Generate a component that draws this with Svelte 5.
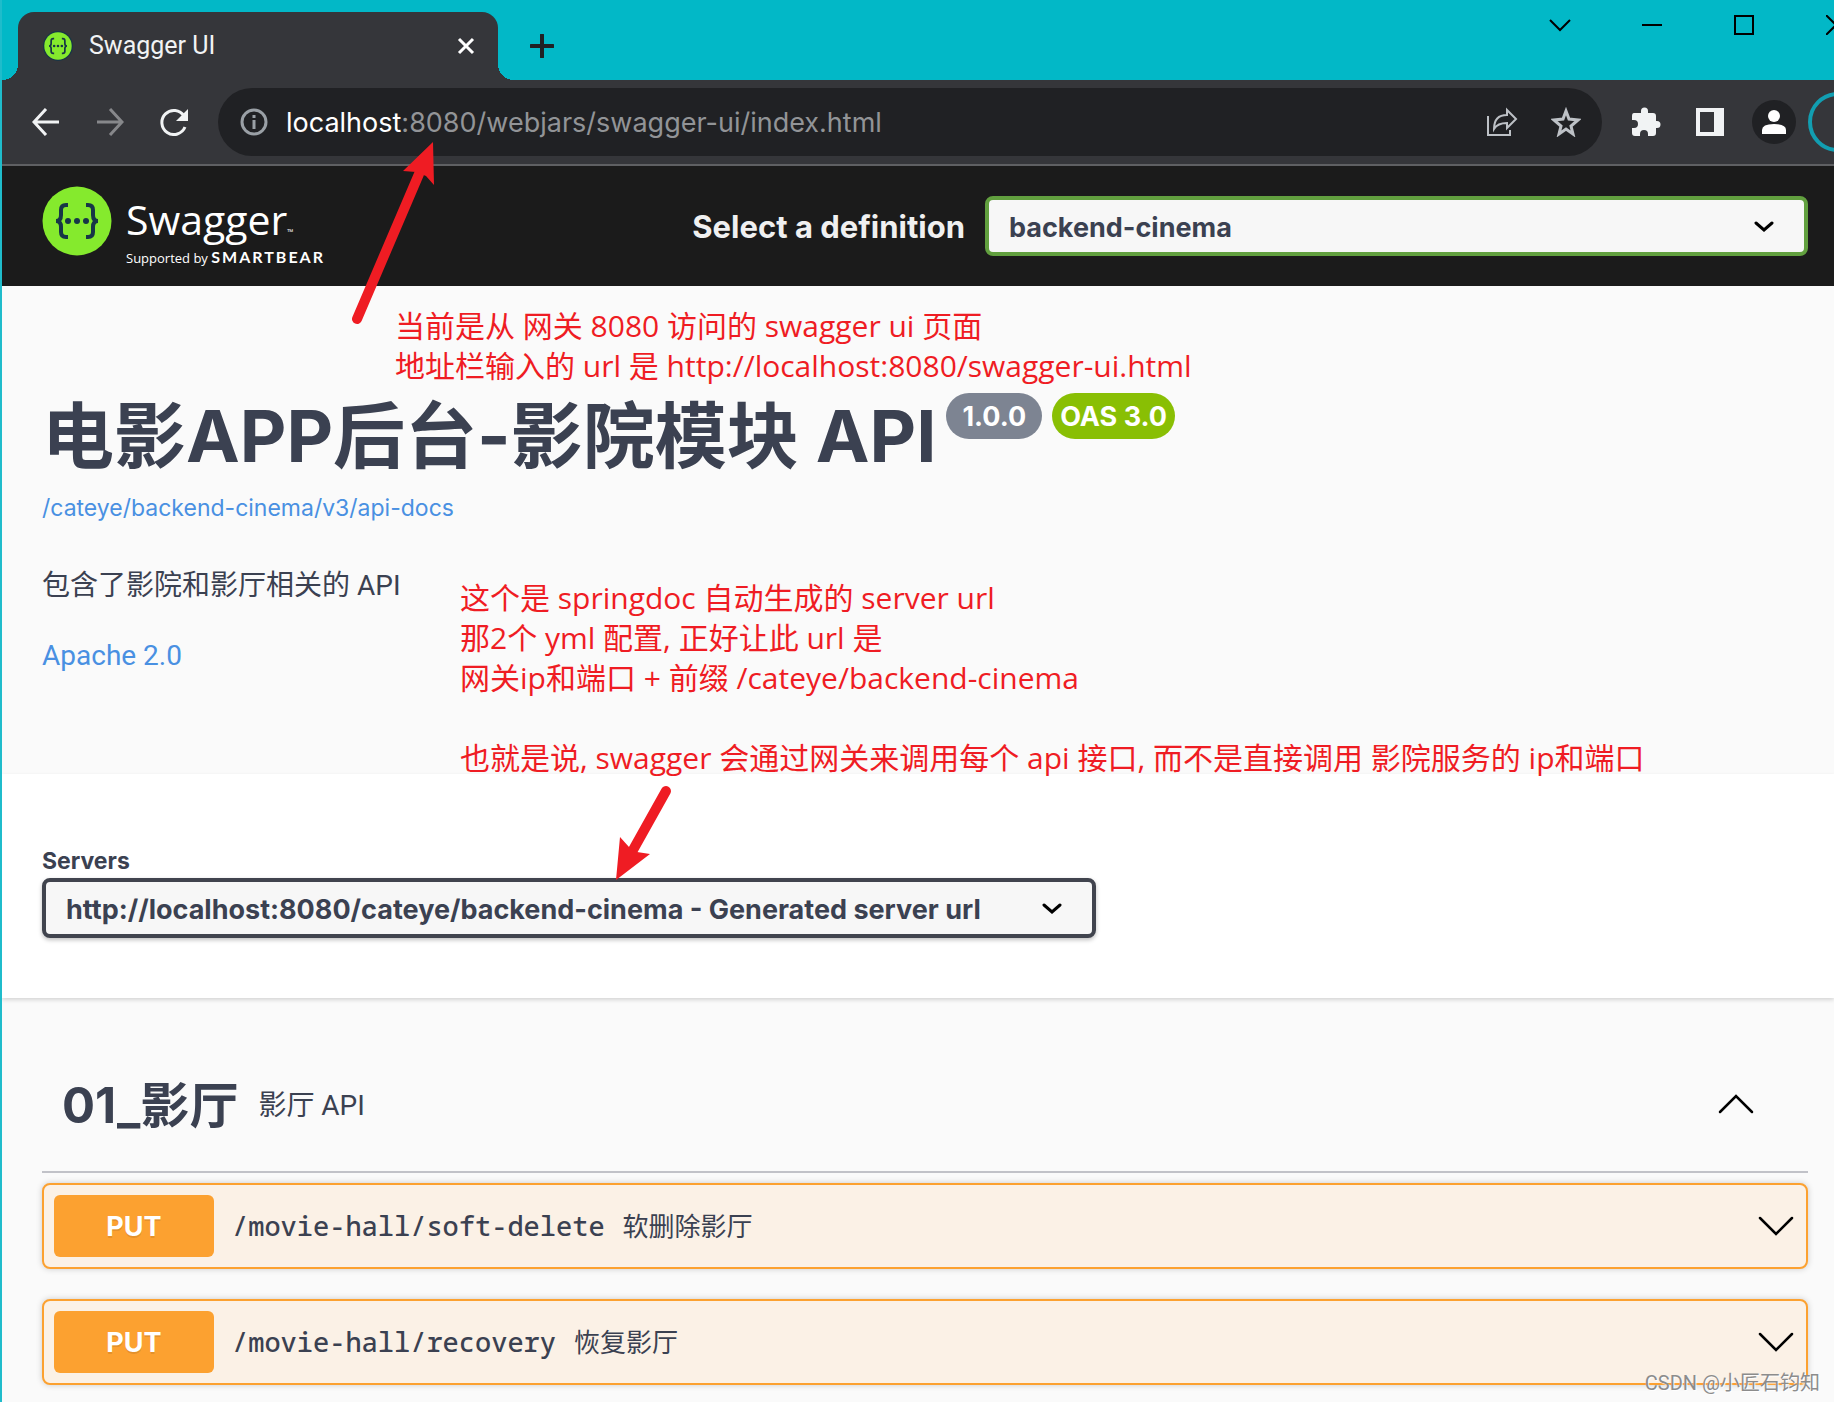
<script>
  const definitions = ['backend-cinema'];
  const servers = ['http://localhost:8080/cateye/backend-cinema - Generated server url'];

  let definition = definitions[0];
  let server = servers[0];
  let tagOpen = true;

  const operations = [
    { method: 'PUT', path: '/movie-hall/soft-delete', summary: '软删除影厅' },
    { method: 'PUT', path: '/movie-hall/recovery', summary: '恢复影厅' }
  ];
</script>

<div class="window">
  <div class="tab-strip">
    <div class="tab">
      <svg class="favicon" viewBox="0 0 70 70" aria-hidden="true">
        <circle cx="35" cy="35" r="35" fill="#173647" />
        <circle cx="35" cy="35" r="32" fill="#85ea2d" />
        <g fill="none" stroke="#173647" stroke-width="4">
          <path d="M26 18h-2q-5 0-5 5v6q0 6-5 6q5 0 5 6v6q0 5 5 5h2" />
          <path d="M44 18h2q5 0 5 5v6q0 6 5 6q-5 0-5 6v6q0 5-5 5h-2" />
        </g>
        <g fill="#173647"><circle cx="26" cy="35" r="3" /><circle cx="35" cy="35" r="3" /><circle cx="44" cy="35" r="3" /></g>
      </svg>
      <span class="tab-title">Swagger UI</span>
      <button class="tab-close" aria-label="Close tab">
        <svg width="18" height="18" viewBox="0 0 18 18"><path d="M2 2l14 14M16 2L2 16" stroke="#fff" stroke-width="3" /></svg>
      </button>
    </div>
    <button class="new-tab" aria-label="New tab">
      <svg width="24" height="24" viewBox="0 0 24 24"><path d="M12 1v22M1 12h22" stroke="#202124" stroke-width="4" stroke-linecap="round" /></svg>
    </button>
    <div class="window-controls">
      <button aria-label="Search tabs">
        <svg width="22" height="14" viewBox="0 0 22 14"><path d="M1 2l10 10L21 2" fill="none" stroke="#000" stroke-width="2" /></svg>
      </button>
      <button aria-label="Minimize">
        <svg width="20" height="20" viewBox="0 0 20 20"><path d="M0 10h20" stroke="#000" stroke-width="2" /></svg>
      </button>
      <button aria-label="Maximize">
        <svg width="20" height="20" viewBox="0 0 20 20"><path d="M1 1h18v18H1z" fill="none" stroke="#000" stroke-width="2" /></svg>
      </button>
      <button aria-label="Close">
        <svg width="20" height="20" viewBox="0 0 20 20"><path d="M0 0l20 20M20 0L0 20" stroke="#000" stroke-width="2" /></svg>
      </button>
    </div>
  </div>

  <div class="toolbar">
    <button aria-label="Back">
      <svg width="28" height="28" viewBox="0 0 28 28"><path d="M27 14H3M14 1L2 14l12 13" fill="none" stroke="#f1f3f4" stroke-width="3" /></svg>
    </button>
    <button aria-label="Forward">
      <svg width="28" height="28" viewBox="0 0 28 28"><path d="M1 14h24M14 1l12 13-12 13" fill="none" stroke="#87888b" stroke-width="3" /></svg>
    </button>
    <button aria-label="Reload">
      <svg width="28" height="28" viewBox="0 0 28 28">
        <path d="M24 8A12 12 0 1 0 25 19" fill="none" stroke="#f1f3f4" stroke-width="3" />
        <path d="M28 1v12H16z" fill="#f1f3f4" />
      </svg>
    </button>
    <div class="omnibox">
      <svg width="28" height="28" viewBox="0 0 28 28" aria-hidden="true">
        <circle cx="14" cy="14" r="12" fill="none" stroke="#9aa0a6" stroke-width="3" />
        <path d="M14 12v9M14 7v3" stroke="#9aa0a6" stroke-width="3" />
      </svg>
      <div class="url" role="textbox" tabindex="0" contenteditable="true" spellcheck="false" aria-label="Address"><b>localhost</b>:8080/webjars/swagger-ui/index.html</div>
      <button aria-label="Share">
        <svg width="32" height="30" viewBox="0 0 32 30" fill="none" stroke="#bdc1c6" stroke-width="2">
          <path d="M2 9v19h22v-5" />
          <path d="M8 22C8 12 13 8 21 8V3l9 9-9 9v-5c-6 0-10 1-13 6z" />
        </svg>
      </button>
      <button aria-label="Bookmark">
        <svg width="30" height="30" viewBox="0 0 30 30"><path d="M15 4l3 8 9 1-7 6 2 8-7-5-7 5 2-8-7-6 9-1z" fill="none" stroke="#bdc1c6" stroke-width="3" /></svg>
      </button>
    </div>
    <button aria-label="Extensions">
      <svg width="30" height="30" viewBox="0 0 30 30">
        <path d="M3 6h7v-2a3.5 3.5 0 0 1 7 0v2h5q3 0 3 3v5h1a3.5 3.5 0 0 1 0 7h-1v5q0 3-3 3h-5v-2a4 4 0 0 0-8 0v2H4q-3 0-3-3v-5h2a4 4 0 0 0 0-8H1V9q0-3 2-3z" fill="#f1f3f4" />
      </svg>
    </button>
    <button aria-label="Side panel">
      <svg width="28" height="28" viewBox="0 0 28 28"><path d="M0 0h28v28H0zM4 4v20h14V4z" fill="#f1f3f4" fill-rule="evenodd" /></svg>
    </button>
    <button aria-label="Profile">
      <svg width="44" height="44" viewBox="0 0 44 44">
        <circle cx="22" cy="22" r="22" fill="#202124" />
        <circle cx="22" cy="16" r="6" fill="#fff" />
        <path d="M10 34v-4q0-6 12-6t12 6v4z" fill="#fff" />
      </svg>
    </button>
    <button aria-label="Update">
      <svg width="60" height="60" viewBox="0 0 60 60"><circle cx="30" cy="30" r="28" fill="none" stroke="#129eb1" stroke-width="4" /></svg>
    </button>
  </div>

  <header class="topbar">
    <a class="logo" href="#top">
      <svg width="70" height="70" viewBox="0 0 70 70" aria-hidden="true">
        <circle cx="35" cy="35" r="34.5" fill="#85ea2d" />
        <g fill="none" stroke="#173647" stroke-width="4">
          <path d="M26 19h-2q-5 0-5 5v5q0 6-5 6q5 0 5 6v5q0 5 5 5h2" />
          <path d="M44 19h2q5 0 5 5v5q0 6 5 6q-5 0-5 6v5q0 5-5 5h-2" />
        </g>
        <g fill="#173647"><circle cx="26" cy="35" r="3" /><circle cx="35" cy="35" r="3" /><circle cx="44" cy="35" r="3" /></g>
      </svg>
      <span class="wordmark">
        <span class="name">Swagger<small>™</small></span>
        <span class="support">Supported by <b>SMARTBEAR</b></span>
      </span>
    </a>
    <label for="definition">Select a definition</label>
    <div class="select definition">
      <select id="definition" bind:value={definition}>
        {#each definitions as d}<option>{d}</option>{/each}
      </select>
      <svg width="20" height="12" viewBox="0 0 20 12"><path d="M2 2l8 7 8-7" fill="none" stroke="#000" stroke-width="3" stroke-linecap="round" /></svg>
    </div>
  </header>

  <section class="info">
    <div class="title">
      <h1>电影APP后台-影院模块 API</h1>
      <span class="badge version">1.0.0</span>
      <span class="badge oas">OAS 3.0</span>
    </div>
    <a class="docs" href="#docs">/cateye/backend-cinema/v3/api-docs</a>
    <p>包含了影院和影厅相关的 API</p>
    <a class="license" href="#license">Apache 2.0</a>
  </section>

  <section class="schemes">
    <label for="server">Servers</label>
    <div class="select server">
      <select id="server" bind:value={server}>
        {#each servers as s}<option>{s}</option>{/each}
      </select>
      <svg width="20" height="12" viewBox="0 0 20 12"><path d="M2 2l8 7 8-7" fill="none" stroke="#000" stroke-width="3" stroke-linecap="round" /></svg>
    </div>
  </section>

  <main>
    <div class="tag">
      <h2>01_影厅</h2>
      <span>影厅 API</span>
      <button aria-label="Toggle section" aria-expanded={tagOpen} on:click={() => (tagOpen = !tagOpen)}>
        <svg width="36" height="20" viewBox="0 0 36 20"><path d="M2 18L18 2l16 16" fill="none" stroke="#000" stroke-width="2.5" stroke-linecap="round" /></svg>
      </button>
    </div>
    {#if tagOpen}
      <div class="operations">
        {#each operations as op}
          <button class="operation">
            <span class="method">{op.method}</span>
            <code>{op.path}</code>
            <span class="summary">{op.summary}</span>
            <svg width="36" height="20" viewBox="0 0 36 20"><path d="M2 2l16 16L34 2" fill="none" stroke="#000" stroke-width="2.5" stroke-linecap="round" /></svg>
          </button>
        {/each}
      </div>
    {/if}
  </main>

  <!-- red notes drawn over the page -->
  <p class="note gateway">当前是从 网关 8080 访问的 swagger ui 页面<br />地址栏输入的 url 是 http://localhost:8080/swagger-ui.html</p>
  <p class="note generated">这个是 springdoc 自动生成的 server url<br />那2个 yml 配置, 正好让此 url 是<br />网关ip和端口 + 前缀 /cateye/backend-cinema<br /><br />也就是说, swagger 会通过网关来调用每个 api 接口, 而不是直接调用 影院服务的 ip和端口</p>
  <svg class="arrow to-url" width="90" height="190" viewBox="0 0 90 190">
    <path d="M8 179L70 34" stroke="#ef1c23" stroke-width="10" stroke-linecap="round" />
    <path d="M84 2L54 31l13 1 10 4 8 9z" fill="#ef1c23" />
  </svg>
  <svg class="arrow to-server" width="70" height="100" viewBox="0 0 70 100">
    <path d="M56 11L23 70" stroke="#ef1c23" stroke-width="10" stroke-linecap="round" />
    <path d="M6 100l4-43 9 10 8 5 13 2z" fill="#ef1c23" />
  </svg>
  <span class="watermark">CSDN @小匠石钧知</span>
</div>

<style>
  :global(body) {
    margin: 0;
    background: #fafafa;
  }
  .window {
    position: relative;
    box-sizing: border-box;
    min-height: 100vh;
    border-left: 2px solid #1fbccb;
    overflow: hidden;
    background: #fafafa;
    color: #3b4151;
    font-family: Inter, "Noto Sans CJK SC", sans-serif;
  }
  button {
    padding: 0;
    border: 0;
    background: none;
    font: inherit;
    color: inherit;
    display: flex;
    align-items: center;
    justify-content: center;
    cursor: pointer;
  }
  svg {
    display: block;
    flex: none;
  }
  a {
    color: #4990e2;
    text-decoration: none;
  }

  .tab-strip {
    display: flex;
    height: 80px;
    background: #02b8c7;
  }
  .tab {
    position: relative;
    box-sizing: border-box;
    display: flex;
    align-items: center;
    width: 480px;
    height: 68px;
    margin: 12px 0 0 16px;
    padding: 0 23px 0 25px;
    gap: 16px;
    border-radius: 16px 16px 0 0;
    background: #35363a;
    color: #f1f3f4;
  }
  .tab::before,
  .tab::after {
    content: "";
    position: absolute;
    bottom: 0;
    width: 16px;
    height: 16px;
  }
  .tab::before {
    right: 100%;
    background: radial-gradient(circle at 0 0, transparent 16px, #35363a 16px);
  }
  .tab::after {
    left: 100%;
    background: radial-gradient(circle at 100% 0, transparent 16px, #35363a 16px);
  }
  .favicon {
    width: 30px;
    height: 30px;
  }
  .tab-title {
    flex: 1;
    font: 25px/32px Roboto, sans-serif;
  }
  .new-tab {
    width: 56px;
    margin: 12px 0 0 16px;
  }
  .window-controls {
    display: flex;
    height: 50px;
    margin: 0 -48px 0 auto;
  }
  .window-controls button {
    width: 92px;
  }

  .toolbar {
    display: flex;
    align-items: center;
    height: 84px;
    margin-right: -36px;
    padding-left: 12px;
    border-bottom: 2px solid #5f6063;
    background: #35363a;
  }
  .toolbar button {
    flex: none;
    width: 64px;
    height: 64px;
  }
  .omnibox {
    flex: 1;
    display: flex;
    align-items: center;
    height: 68px;
    margin: 0 12px;
    padding: 0 4px 0 22px;
    border-radius: 34px;
    background: #202124;
  }
  .url {
    flex: 1;
    padding: 2px 0 0 18px;
    font-size: 27px;
    line-height: 36px;
    color: #929497;
  }
  .url b {
    font-weight: 400;
    color: #fff;
  }

  .topbar {
    display: flex;
    align-items: center;
    height: 120px;
    padding: 0 26px 0 40px;
    background: #1b1b1b;
  }
  .logo {
    display: flex;
    gap: 14px;
    height: 80px;
    margin-right: auto;
    color: #fff;
    font-family: "Open Sans", sans-serif;
  }
  .wordmark {
    display: flex;
    flex-direction: column;
  }
  .name {
    height: 62px;
    font-size: 41px;
    line-height: 66px;
  }
  .name small {
    font-size: 8px;
  }
  .support {
    font-size: 13px;
    line-height: 18px;
  }
  .support b {
    font: 700 16px/18px Lato, sans-serif;
    letter-spacing: 2px;
  }
  label {
    font-weight: 700;
  }
  .topbar label {
    margin-right: 20px;
    font-size: 31px;
    color: #f0f0f0;
  }

  .select {
    position: relative;
  }
  .select select {
    box-sizing: border-box;
    width: 100%;
    height: 60px;
    padding: 2px 80px 0 20px;
    border: 4px solid #41444e;
    border-radius: 8px;
    background: #f7f7f7;
    box-shadow: 0 2px 4px rgba(0, 0, 0, 0.25);
    color: #3b4151;
    font: 700 27px Inter, sans-serif;
    appearance: none;
  }
  .select svg {
    position: absolute;
    top: 25px;
    right: 34px;
    pointer-events: none;
  }
  .definition {
    flex: 0 1 823px;
  }
  .select.definition select {
    border-color: #62a03f;
    box-shadow: none;
  }
  .server {
    max-width: 1054px;
  }

  .info {
    display: flex;
    flex-direction: column;
    align-items: flex-start;
    padding: 107px 40px 98px;
  }
  .title {
    display: flex;
    align-items: flex-start;
    gap: 10px;
  }
  h1,
  h2,
  p {
    margin: 0;
  }
  h1 {
    font-size: 72px;
    line-height: 86px;
  }
  .badge {
    box-sizing: border-box;
    height: 46px;
    padding: 2px 16px 0;
    border-radius: 23px;
    background: #7d8492;
    color: #fff;
    font-size: 27px;
    font-weight: 700;
    line-height: 44px;
  }
  .oas {
    padding: 2px 8px 0;
    background: #89bf04;
  }
  .docs {
    margin-top: 14px;
    font-size: 23px;
    line-height: 30px;
  }
  .info p,
  .license,
  .tag span {
    font: 28px/40px Roboto, "Noto Sans CJK SC", sans-serif;
  }
  .info p {
    margin: 43px 0 30px;
  }

  .schemes {
    padding: 72px 40px 60px;
    background: #fff;
    box-shadow: 0 2px 4px rgba(0, 0, 0, 0.15);
  }
  .schemes label {
    display: block;
    margin-bottom: 2px;
    font-size: 23px;
    line-height: 30px;
  }

  main {
    padding: 39px 26px 16px 40px;
  }
  .tag {
    display: flex;
    align-items: center;
    height: 134px;
    padding: 0 54px 0 20px;
    gap: 20px;
    border-bottom: 2px solid #c1c2c8;
  }
  .tag h2,
  .tag span {
    padding-top: 3px;
  }
  h2 {
    font-size: 49px;
    line-height: 60px;
  }
  .tag button {
    margin-left: auto;
  }
  .operations {
    display: flex;
    flex-direction: column;
    gap: 30px;
    margin-top: 10px;
  }
  .operation {
    box-sizing: border-box;
    justify-content: flex-start;
    height: 86px;
    padding: 0 12px 0 10px;
    gap: 18px;
    border: 2px solid #fca130;
    border-radius: 8px;
    background: #fbf1e6;
    box-shadow: 0 0 6px rgba(0, 0, 0, 0.19);
  }
  .method {
    box-sizing: border-box;
    width: 160px;
    height: 62px;
    padding-top: 2px;
    border-radius: 6px;
    background: #fca130;
    color: #fff;
    font-size: 27px;
    font-weight: 700;
    line-height: 60px;
    text-align: center;
    text-shadow: 0 2px 0 rgba(0, 0, 0, 0.1);
  }
  code {
    font: 500 27px/36px "Noto Sans Mono", "DejaVu Sans Mono", monospace;
  }
  .summary {
    padding-top: 2px;
    font-size: 26px;
    line-height: 36px;
  }
  .operation svg {
    margin-left: auto;
  }

  .note {
    position: absolute;
    color: #ef1c23;
    font: 30px/40px "Open Sans", "Noto Sans CJK SC", sans-serif;
    white-space: nowrap;
  }
  .gateway {
    top: 306px;
    left: 393px;
  }
  .generated {
    top: 578px;
    left: 458px;
  }
  .arrow {
    position: absolute;
    pointer-events: none;
  }
  .to-url {
    top: 140px;
    left: 347px;
  }
  .to-server {
    top: 780px;
    left: 608px;
  }
  .watermark {
    position: absolute;
    right: 14px;
    bottom: 4px;
    color: #8c8c8c;
    font: 20px/30px Roboto, "Noto Sans CJK SC", sans-serif;
    text-shadow: 1px 1px 1px #fff;
  }
</style>
